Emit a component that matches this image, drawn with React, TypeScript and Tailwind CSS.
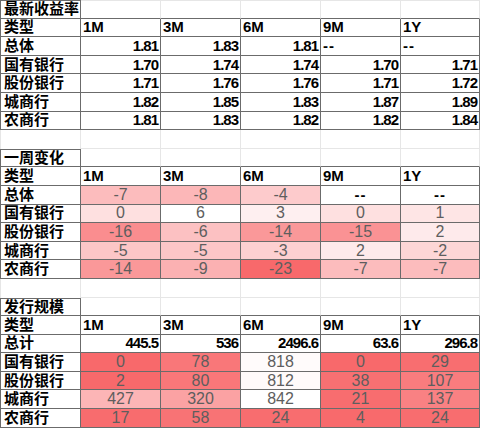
import React from "react";

const COLS = "grid grid-cols-[81px_80px_80px_80px_80px_79px] h-[18.6px] shrink-0 leading-[18px]";

function heat(v: number, min: number, max: number) {
  const t = Math.max(0, Math.min(1, (max - v) / (max - min)));
  const r = Math.round(255 + (248 - 255) * t);
  const g = Math.round(255 + (105 - 255) * t);
  const b = Math.round(255 + (107 - 255) * t);
  return `rgb(${r},${g},${b})`;
}

const heads = ["1M", "3M", "6M", "9M", "1Y"];

function TitleRow({ title, first }: { title: string; first?: boolean }) {
  return (
    <div className={COLS}>
      <div className="border border-[#6b6b6b] flex items-center pl-[3px] text-[15px] font-bold text-black overflow-hidden">
        {title}
      </div>
      {heads.map((h) => (
        <div
          key={h}
          className={
            first
              ? "border-t border-r border-b border-t-[#e6e6e6] border-r-[#e6e6e6] border-b-[#6b6b6b]"
              : "border-r border-b border-r-[#e6e6e6] border-b-[#6b6b6b]"
          }
        />
      ))}
    </div>
  );
}

function HeaderRow() {
  return (
    <div className={COLS}>
      <div className="border-l border-r border-b border-[#6b6b6b] flex items-center pl-[3px] text-[15px] font-bold text-black overflow-hidden">
        类型
      </div>
      {heads.map((h) => (
        <div
          key={h}
          className="border-r border-b border-[#6b6b6b] flex items-center pl-[2px] text-[15px] font-bold text-black overflow-hidden"
        >
          {h}
        </div>
      ))}
    </div>
  );
}

function SepRow() {
  return (
    <div className={COLS}>
      <div className="border-l border-r border-[#e6e6e6]" />
      {heads.map((h) => (
        <div key={h} className="border-r border-b border-[#e6e6e6]" />
      ))}
    </div>
  );
}

function LabelCell({ label }: { label: string }) {
  return (
    <div className="border-l border-r border-b border-[#6b6b6b] flex items-center pl-[3px] text-[15px] font-bold text-black whitespace-nowrap overflow-hidden">
      {label}
    </div>
  );
}

function BoldRow({ label, vals }: { label: string; vals: string[] }) {
  return (
    <div className={COLS}>
      <LabelCell label={label} />
      {vals.map((v, i) =>
        v === "--" ? (
          <div
            key={i}
            className="border-r border-b border-[#6b6b6b] flex items-center pl-[2px] text-[15px] font-bold text-black tracking-[1px] overflow-hidden"
          >
            --
          </div>
        ) : (
          <div
            key={i}
            className="border-r border-b border-[#6b6b6b] flex items-center justify-end pr-[2px] text-[15px] font-bold text-black tracking-[-1px] overflow-hidden"
          >
            {v}
          </div>
        )
      )}
    </div>
  );
}

function HeatRow({
  label,
  vals,
  min,
  max,
}: {
  label: string;
  vals: (number | string)[];
  min: number;
  max: number;
}) {
  return (
    <div className={COLS}>
      <LabelCell label={label} />
      {vals.map((v, i) =>
        typeof v === "string" ? (
          <div
            key={i}
            className="border-r border-b border-[#6b6b6b] flex items-center justify-center text-[15px] font-bold text-black tracking-[1px] overflow-hidden"
          >
            {v}
          </div>
        ) : (
          <div
            key={i}
            className="border-r border-b border-[#6b6b6b] flex items-center justify-center text-[16px] text-[#5e5e5e] overflow-hidden"
            style={{ backgroundColor: heat(v, min, max) }}
          >
            {v}
          </div>
        )
      )}
    </div>
  );
}

const s1: [string, string[]][] = [
  ["总体", ["1.81", "1.83", "1.81", "--", "--"]],
  ["国有银行", ["1.70", "1.74", "1.74", "1.70", "1.71"]],
  ["股份银行", ["1.71", "1.76", "1.76", "1.71", "1.72"]],
  ["城商行", ["1.82", "1.85", "1.83", "1.87", "1.89"]],
  ["农商行", ["1.81", "1.83", "1.82", "1.82", "1.84"]],
];

const s2: [string, (number | string)[]][] = [
  ["总体", [-7, -8, -4, "--", "--"]],
  ["国有银行", [0, 6, 3, 0, 1]],
  ["股份银行", [-16, -6, -14, -15, 2]],
  ["城商行", [-5, -5, -3, 2, -2]],
  ["农商行", [-14, -9, -23, -7, -7]],
];

const s3: [string, number[]][] = [
  ["国有银行", [0, 78, 818, 0, 29]],
  ["股份银行", [2, 80, 812, 38, 107]],
  ["城商行", [427, 320, 842, 21, 137]],
  ["农商行", [17, 58, 24, 4, 24]],
];

export default function App() {
  return (
    <div className="w-[482px] h-[431px] bg-white flex flex-col overflow-hidden font-['Liberation_Sans','Noto_Sans_CJK_SC',sans-serif]">
      <TitleRow title="最新收益率" first />
      <HeaderRow />
      {s1.map(([l, v]) => (
        <BoldRow key={l} label={l} vals={v} />
      ))}
      <SepRow />
      <TitleRow title="一周变化" />
      <HeaderRow />
      {s2.map(([l, v]) => (
        <HeatRow key={l} label={l} vals={v} min={-23} max={6} />
      ))}
      <SepRow />
      <TitleRow title="发行规模" />
      <HeaderRow />
      <BoldRow label="总计" vals={["445.5", "536", "2496.6", "63.6", "296.8"]} />
      {s3.map(([l, v]) => (
        <HeatRow key={l} label={l} vals={v} min={0} max={842} />
      ))}
    </div>
  );
}
